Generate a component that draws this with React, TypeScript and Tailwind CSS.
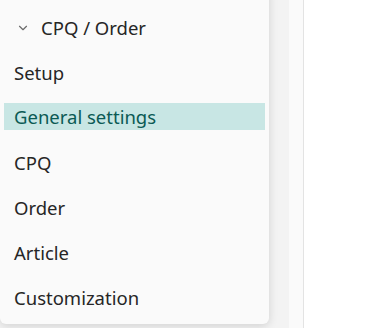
import { ChevronDown } from 'lucide-react';

const items = ['Setup', 'General settings', 'CPQ', 'Order', 'Article', 'Customization'];

export default function App() {
  return (
    <div
      className="relative h-[328px] w-[365px] overflow-hidden bg-white"
      style={{ fontFamily: '"Noto Sans", "Open Sans", sans-serif' }}
    >
      {/* page behind the popover */}
      <div className="flex h-full">
        <div className="w-[289px] bg-[#f3f3f3]" />
        <div className="w-[15px] border-r border-[#e3e3e3] bg-[#fafafa]" />
        <div className="flex-1 bg-white" />
      </div>

      {/* popover menu */}
      <div className="absolute left-0 top-[-13px] w-[269px] rounded-md bg-[#fafafa] pt-[18px] pb-[4px] shadow-[0_2px_10px_rgba(0,0,0,0.14)]">
        <div className="flex h-[45px] items-center px-[16px] text-[18.5px] text-[#262626]">
          <ChevronDown className="mr-[11px] h-[14px] w-[14px] text-[#6b6b6b]" strokeWidth={2} />
          <span>CPQ / Order</span>
        </div>
        {items.map((item) => {
          const active = item === 'General settings';
          return (
            <div key={item} className="px-[4px]">
              <div
                className={
                  active
                    ? 'flex h-[27px] mt-[8px] mb-[10px] items-center bg-[#c8e6e4] px-[10px] text-[18.5px] text-[#0b5a54]'
                    : 'flex h-[45px] items-center px-[10px] text-[18.5px] text-[#262626]'
                }
              >
                {item}
              </div>
            </div>
          );
        })}
      </div>
    </div>
  );
}
